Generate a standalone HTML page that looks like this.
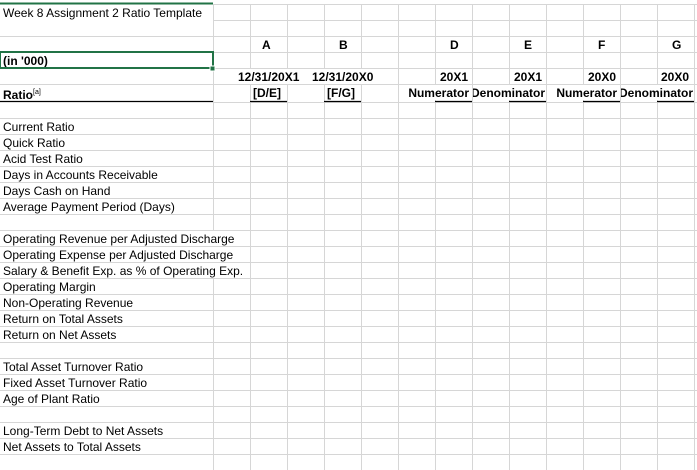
<!DOCTYPE html>
<html><head><meta charset="utf-8"><style>
body{margin:0;width:697px;height:470px;overflow:hidden;background:#fff;font-family:"Liberation Sans",Arial,sans-serif;font-size:12px;color:#000;position:relative}
.t{position:absolute;white-space:nowrap;line-height:17px;height:15px;top:0}
.w{background:#fff;padding-right:1px}
.b{font-weight:bold}
.c{position:absolute;overflow:hidden;white-space:nowrap;line-height:16px;height:15px;font-weight:bold}
.c span{position:absolute;right:1px;top:0}
</style></head><body>
<svg width="697" height="470" style="position:absolute;left:0;top:0">
<g stroke="#d6d6d6" stroke-width="1">
<line x1="213" y1="20.5" x2="697" y2="20.5"/>
<line x1="0" y1="36.5" x2="697" y2="36.5"/>
<line x1="0" y1="68.5" x2="697" y2="68.5"/>
<line x1="0" y1="84.5" x2="697" y2="84.5"/>
<line x1="0" y1="118.5" x2="697" y2="118.5"/>
<line x1="0" y1="134.5" x2="697" y2="134.5"/>
<line x1="0" y1="150.5" x2="697" y2="150.5"/>
<line x1="0" y1="166.5" x2="697" y2="166.5"/>
<line x1="0" y1="182.5" x2="697" y2="182.5"/>
<line x1="0" y1="198.5" x2="697" y2="198.5"/>
<line x1="0" y1="214.5" x2="697" y2="214.5"/>
<line x1="0" y1="230.5" x2="697" y2="230.5"/>
<line x1="0" y1="246.5" x2="697" y2="246.5"/>
<line x1="0" y1="262.5" x2="697" y2="262.5"/>
<line x1="0" y1="278.5" x2="697" y2="278.5"/>
<line x1="0" y1="294.5" x2="697" y2="294.5"/>
<line x1="0" y1="310.5" x2="697" y2="310.5"/>
<line x1="0" y1="326.5" x2="697" y2="326.5"/>
<line x1="0" y1="342.5" x2="697" y2="342.5"/>
<line x1="0" y1="358.5" x2="697" y2="358.5"/>
<line x1="0" y1="374.5" x2="697" y2="374.5"/>
<line x1="0" y1="390.5" x2="697" y2="390.5"/>
<line x1="0" y1="406.5" x2="697" y2="406.5"/>
<line x1="0" y1="422.5" x2="697" y2="422.5"/>
<line x1="0" y1="438.5" x2="697" y2="438.5"/>
<line x1="0" y1="454.5" x2="697" y2="454.5"/>
<line x1="213" y1="52.5" x2="697" y2="52.5"/>
<line x1="213" y1="102.5" x2="697" y2="102.5"/>
<line x1="213.5" y1="0" x2="213.5" y2="470"/>
<line x1="250.5" y1="0" x2="250.5" y2="470"/>
<line x1="287.5" y1="0" x2="287.5" y2="470"/>
<line x1="324.5" y1="0" x2="324.5" y2="470"/>
<line x1="361.5" y1="0" x2="361.5" y2="470"/>
<line x1="398.5" y1="0" x2="398.5" y2="470"/>
<line x1="435.5" y1="0" x2="435.5" y2="470"/>
<line x1="472.5" y1="0" x2="472.5" y2="470"/>
<line x1="509.5" y1="0" x2="509.5" y2="470"/>
<line x1="546.5" y1="0" x2="546.5" y2="470"/>
<line x1="583.5" y1="0" x2="583.5" y2="470"/>
<line x1="620.5" y1="0" x2="620.5" y2="470"/>
<line x1="657.5" y1="0" x2="657.5" y2="470"/>
<line x1="694.5" y1="0" x2="694.5" y2="470"/>
</g>
<rect x="0" y="0" width="697" height="5" fill="#fff"/>
<line x1="213" y1="4.5" x2="697" y2="4.5" stroke="#d6d6d6"/>
<line x1="0" y1="3.5" x2="213" y2="3.5" stroke="#217346" stroke-width="2"/>
</svg>
<div class="t w" style="left:3px;top:5px">Week 8 Assignment 2 Ratio Template</div>
<div class="t b" style="left:262px;top:37px">A</div>
<div class="t b" style="left:339px;top:37px">B</div>
<div class="t b" style="left:450px;top:37px">D</div>
<div class="t b" style="left:524px;top:37px">E</div>
<div class="t b" style="left:598px;top:37px">F</div>
<div class="t b" style="left:672px;top:37px">G</div>
<div class="t b" style="left:3px;top:53px">(in '000)</div>
<div class="t b w" style="left:238px;top:69px;padding-left:2px;margin-left:-2px">12/31/20X1</div>
<div class="t b w" style="left:312px;top:69px;padding-left:2px;margin-left:-2px">12/31/20X0</div>
<div class="t b" style="left:440px;top:69px">20X1</div>
<div class="t b" style="left:514px;top:69px">20X1</div>
<div class="t b" style="left:588px;top:69px">20X0</div>
<div class="t b" style="left:661px;top:69px">20X0</div>
<div class="t b" style="left:3px;top:85px;line-height:16px">Ratio<sup style="font-size:7px;font-weight:normal;vertical-align:5px">[a]</sup></div>
<div class="t b" style="left:253px;top:85px;line-height:16px">[D/E]</div>
<div class="t b" style="left:327px;top:85px;line-height:16px">[F/G]</div>
<div class="c" style="left:399px;top:85px;width:72px;background:#fff"><span style="right:2px">Numerator</span></div>
<div class="c" style="left:473px;top:85px;width:73px;background:#fff"><span>Denominator</span></div>
<div class="c" style="left:547px;top:85px;width:72px;background:#fff"><span style="right:2px">Numerator</span></div>
<div class="c" style="left:621px;top:85px;width:73px;background:#fff"><span>Denominator</span></div>
<svg width="697" height="470" style="position:absolute;left:0;top:0;pointer-events:none">
<g stroke="#000" stroke-width="1.3">
<line x1="0" y1="101.5" x2="213" y2="101.5"/>
<line x1="250" y1="101.5" x2="287" y2="101.5"/>
<line x1="324" y1="101.5" x2="361" y2="101.5"/>
<line x1="435" y1="101.5" x2="472" y2="101.5"/>
<line x1="509" y1="101.5" x2="546" y2="101.5"/>
<line x1="583" y1="101.5" x2="620" y2="101.5"/>
<line x1="657" y1="101.5" x2="694" y2="101.5"/>
</g>
<rect x="0" y="52" width="213" height="16" fill="none" stroke="#217346" stroke-width="2"/>
<rect x="210" y="66" width="5" height="5" fill="#217346" stroke="#fff" stroke-width="1"/>
</svg>
<div class="t w" style="left:3px;top:119px">Current Ratio</div>
<div class="t w" style="left:3px;top:135px">Quick Ratio</div>
<div class="t w" style="left:3px;top:151px">Acid Test Ratio</div>
<div class="t w" style="left:3px;top:167px">Days in Accounts Receivable</div>
<div class="t w" style="left:3px;top:183px">Days Cash on Hand</div>
<div class="t w" style="left:3px;top:199px">Average Payment Period (Days)</div>
<div class="t w" style="left:3px;top:231px">Operating Revenue per Adjusted Discharge</div>
<div class="t w" style="left:3px;top:247px">Operating Expense per Adjusted Discharge</div>
<div class="t w" style="left:3px;top:263px">Salary &amp; Benefit Exp. as % of Operating Exp.</div>
<div class="t w" style="left:3px;top:279px">Operating Margin</div>
<div class="t w" style="left:3px;top:295px">Non-Operating Revenue</div>
<div class="t w" style="left:3px;top:311px">Return on Total Assets</div>
<div class="t w" style="left:3px;top:327px">Return on Net Assets</div>
<div class="t w" style="left:3px;top:359px">Total Asset Turnover Ratio</div>
<div class="t w" style="left:3px;top:375px">Fixed Asset Turnover Ratio</div>
<div class="t w" style="left:3px;top:391px">Age of Plant Ratio</div>
<div class="t w" style="left:3px;top:423px">Long-Term Debt to Net Assets</div>
<div class="t w" style="left:3px;top:439px">Net Assets to Total Assets</div>
</body></html>
